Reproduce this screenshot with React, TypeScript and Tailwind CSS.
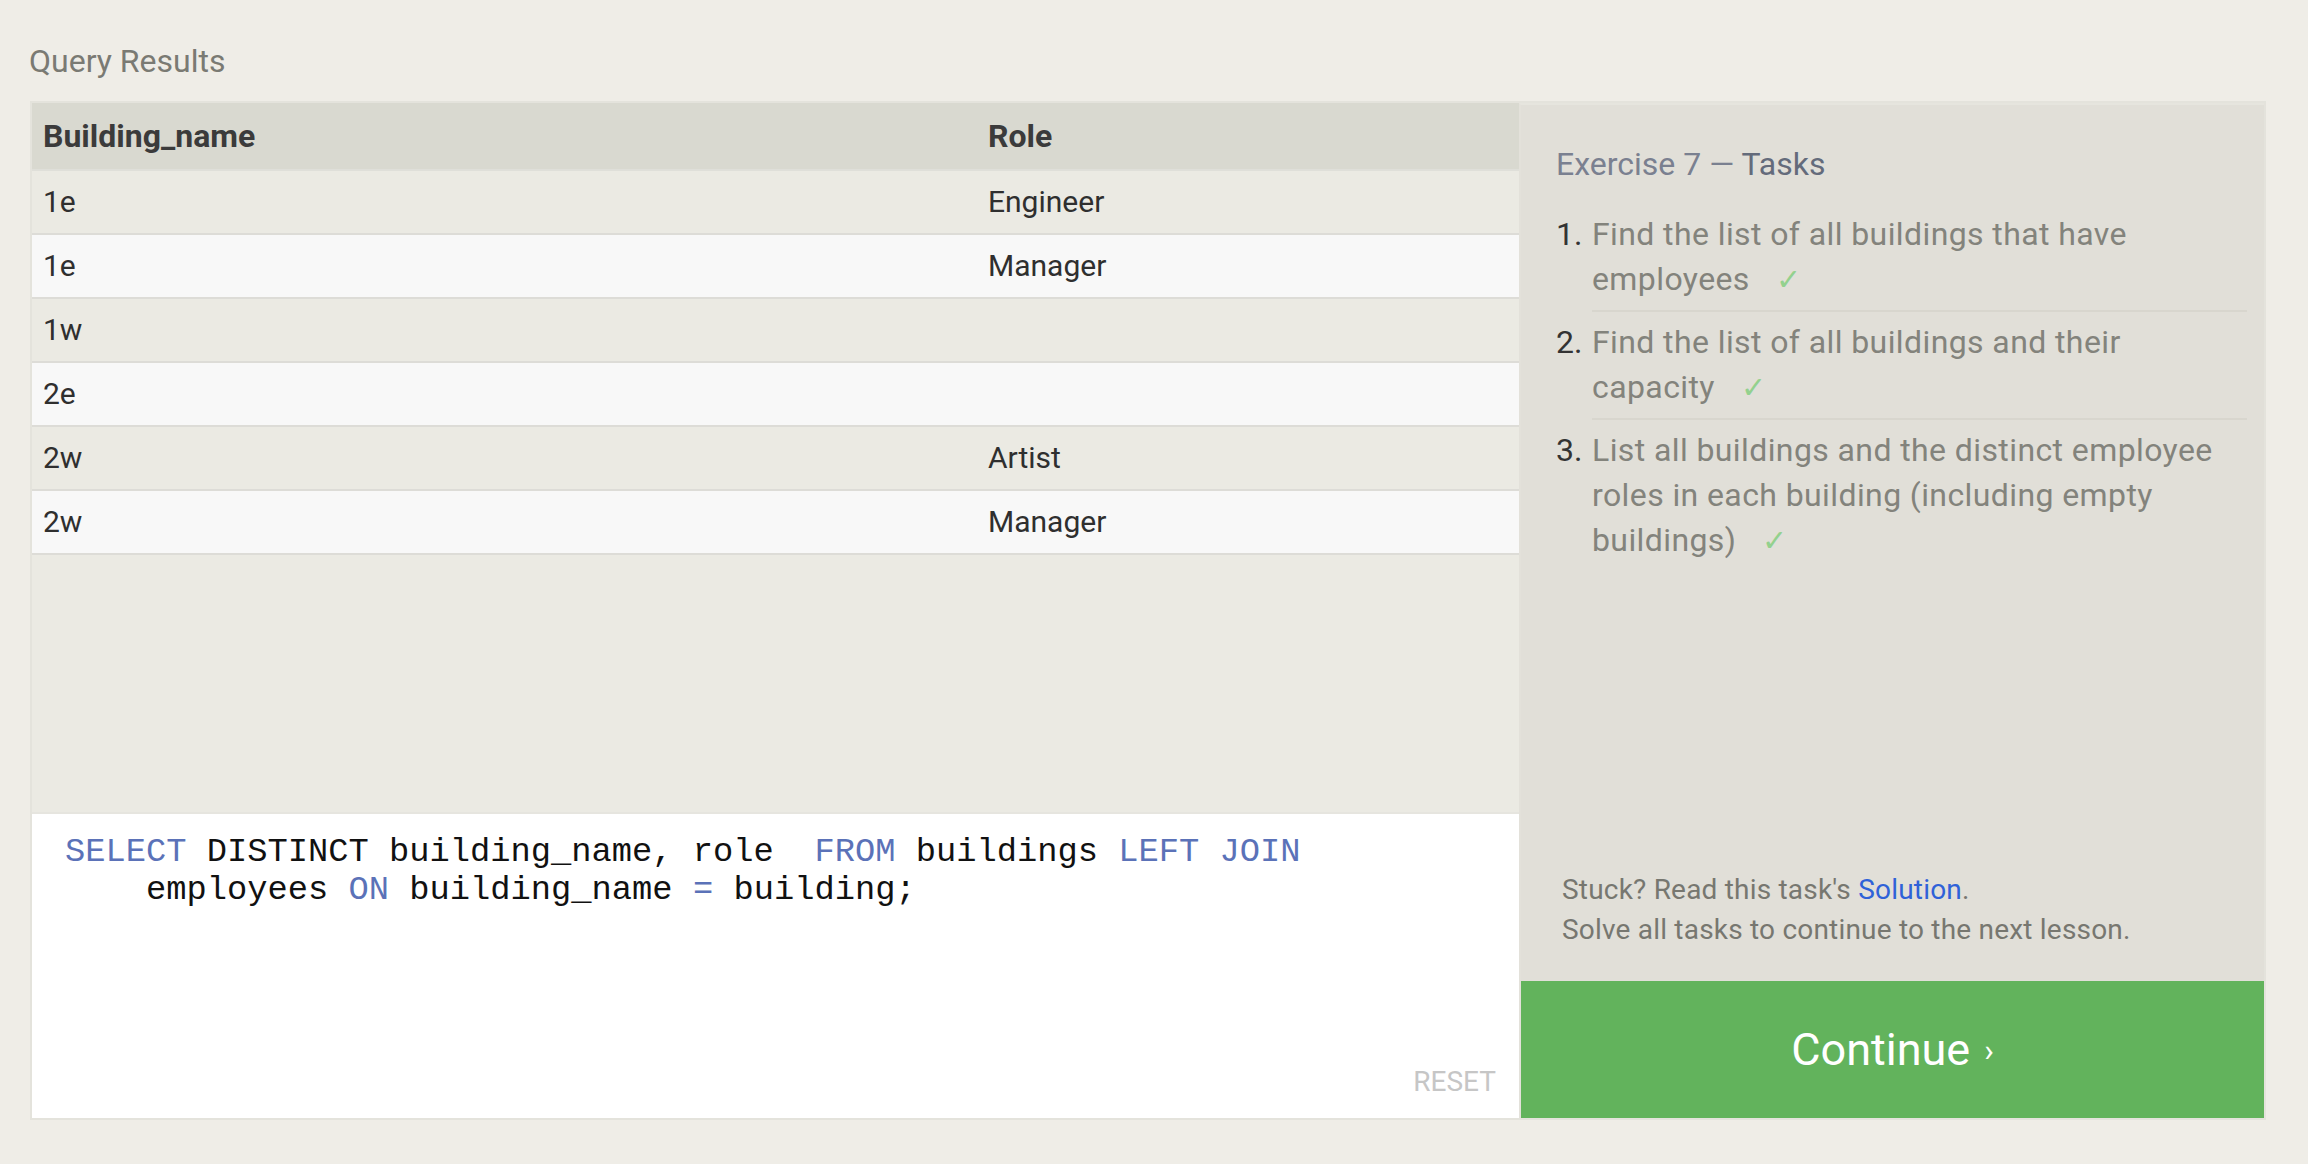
import React from 'react';

interface Row {
  building: string;
  role: string;
}

const rows: Row[] = [
  { building: '1e', role: 'Engineer' },
  { building: '1e', role: 'Manager' },
  { building: '1w', role: '' },
  { building: '2e', role: '' },
  { building: '2w', role: 'Artist' },
  { building: '2w', role: 'Manager' },
];

// each task is split at the same line breaks as the lesson panel
const tasks: string[][] = [
  ['Find the list of all buildings that have', 'employees'],
  ['Find the list of all buildings and their', 'capacity'],
  ['List all buildings and the distinct employee', 'roles in each building (including empty', 'buildings)'],
];

const Kw: React.FC<{ children: React.ReactNode }> = ({ children }) => (
  <span className="text-[#5b72b8]">{children}</span>
);

const App: React.FC = () => {
  return (
    <div className="min-h-screen bg-[#efede7] pt-[41px] font-['Roboto',_sans-serif]">
      <h2 className="ml-[29px] mb-[20px] text-[32px] leading-[40px] text-[#7a7a73]">Query Results</h2>

      <div className="ml-[30px] w-[2236px] h-[1019px] border-2 border-[#e4e3dc] flex">
        {/* left: results + editor */}
        <div className="w-[1487px] flex flex-col">
          <div className="flex-1 bg-[#ebeae3]">
            <div className="flex items-center h-[68px] bg-[#d9d9d0] border-b-2 border-[#dfdfd9] text-[32px] font-bold text-[#3b3b3b] leading-none">
              <div className="w-[945px] pl-[11px]">Building_name</div>
              <div className="flex-1 pl-[11px]">Role</div>
            </div>
            {rows.map((row, i) => (
              <div
                key={i}
                className={`flex items-center h-[64px] border-b-2 border-[#dddcd7] text-[30px] text-[#2f2f2f] leading-none ${
                  i % 2 === 0 ? 'bg-[#ebeae3]' : 'bg-[#f8f8f8]'
                }`}
              >
                <div className="w-[945px] pl-[11px]">{row.building}</div>
                <div className="flex-1 pl-[11px]">{row.role}</div>
              </div>
            ))}
          </div>

          <div className="h-[306px] bg-white border-t-2 border-[#e6e5df] flex flex-col pl-[33px] pr-[23px] pt-[19px] pb-[22px]">
            <pre className="font-['Liberation_Mono',_monospace] text-[33.75px] leading-[38px] text-[#111]">
              <Kw>SELECT</Kw> DISTINCT building_name, role  <Kw>FROM</Kw> buildings <Kw>LEFT</Kw> <Kw>JOIN</Kw>
              {'\n    '}employees <Kw>ON</Kw> building_name <Kw>=</Kw> building;
            </pre>
            <div className="mt-auto self-end text-[28px] leading-none text-[#c6c6c6]">RESET</div>
          </div>
        </div>

        {/* right: tasks */}
        <div className="w-[745px] bg-[#e1dfd8] border-l-2 border-l-[#e3e1da] border-t-2 border-t-[#e6e5de] flex flex-col">
          <div className="pl-[35px] pr-[17px] pt-[39px]">
            <h3 className="text-[32px] leading-[40px] mb-[20px]">
              <span className="text-[#7a8090]">Exercise 7 — </span>
              <span className="text-[#646b7b]">Tasks</span>
            </h3>
            <ol>
              {tasks.map((lines, i) => (
                <li key={i} className="flex pt-2 text-[32px] leading-[45px]">
                  <span className="w-[36px] text-[#333]">{i + 1}.</span>
                  <div
                    className={`flex-1 pb-2 text-[#83837c] tracking-[0.4px] ${i < tasks.length - 1 ? 'border-b-2 border-[#d8d6ce]' : ''}`}
                  >
                    {lines.map((line, j) => (
                      <div key={j} className="whitespace-nowrap h-[45px]">
                        {line}
                        {j === lines.length - 1 && (
                          <span className="ml-[26px] font-['DejaVu_Sans',_sans-serif] text-[30px] leading-none font-light text-[#93d18e]">✓</span>
                        )}
                      </div>
                    ))}
                  </div>
                </li>
              ))}
            </ol>
          </div>

          <div className="mt-auto pl-[41px] pb-[31px] text-[28px] tracking-[0.2px] leading-[40px] text-[#777770]">
            <p>
              Stuck? Read this task's <a className="text-[#2f62d8]">Solution</a>.
            </p>
            <p>Solve all tasks to continue to the next lesson.</p>
          </div>

          <button className="h-[137px] bg-[#62b35c] flex items-center justify-center text-white text-[45px] leading-none">
            Continue<span className="ml-[14px] text-[32px]">›</span>
          </button>
        </div>
      </div>
    </div>
  );
};

export default App;
